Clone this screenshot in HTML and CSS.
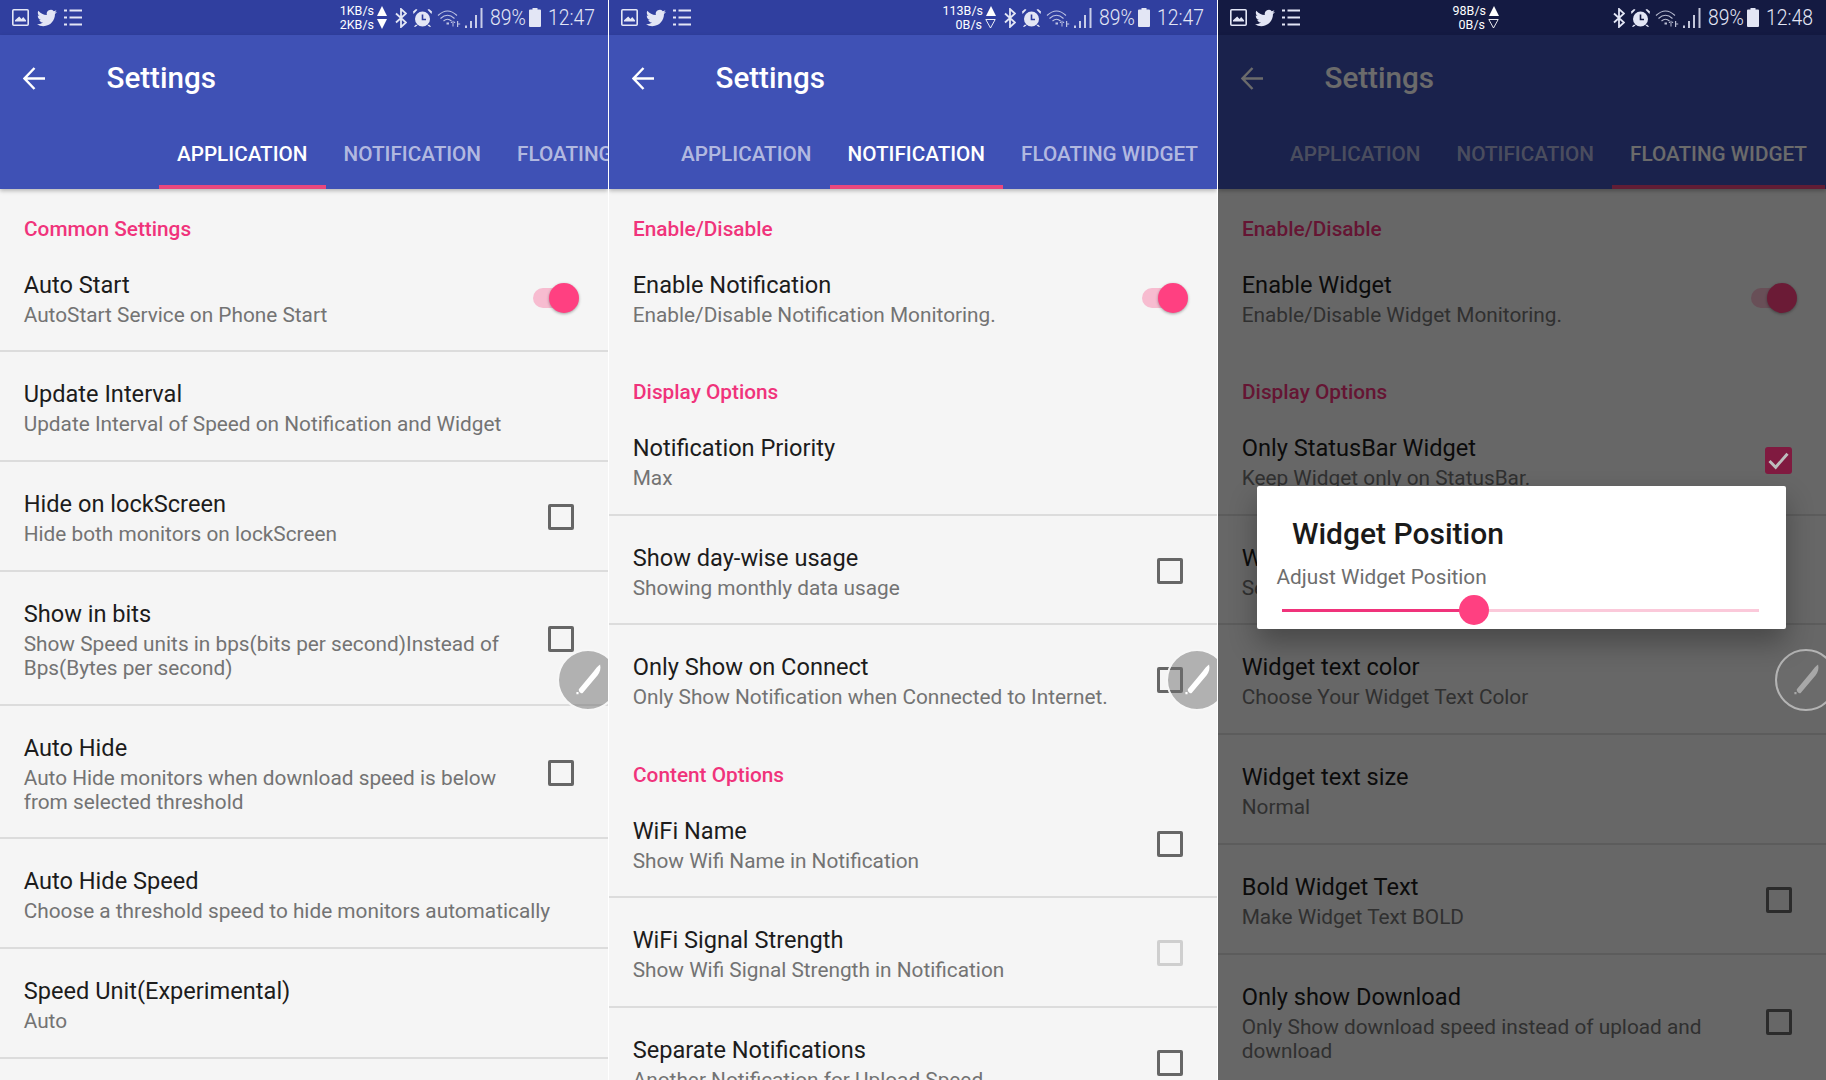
FILE: index.html
```html
<!DOCTYPE html>
<html lang="en">
<head>
    <meta charset="UTF-8">
    <meta name="viewport" content="width=device-width, initial-scale=1.0">
    <title>Settings</title>
    <link rel="stylesheet" href="styles.css">
</head>
<body>
    <svg class="defs" xmlns="http://www.w3.org/2000/svg">
        <symbol id="i-image" viewBox="0 0 17 17">
            <rect x="0.8" y="0.8" width="15.4" height="15.4" rx="1" fill="none" stroke="currentColor" stroke-width="1.6"/>
            <path d="M3 12.5h11v-1.2L11.2 8 9.5 10 7.2 7.6 3 11.3z" fill="currentColor"/>
        </symbol>
        <symbol id="i-twitter" viewBox="0 0 24 24">
            <path fill="currentColor" d="M23.953 4.57a10 10 0 01-2.825.775 4.958 4.958 0 002.163-2.723c-.951.555-2.005.959-3.127 1.184a4.92 4.92 0 00-8.384 4.482C7.69 8.095 4.067 6.13 1.64 3.162a4.822 4.822 0 00-.666 2.475c0 1.71.87 3.213 2.188 4.096a4.904 4.904 0 01-2.228-.616v.06a4.923 4.923 0 003.946 4.827 4.996 4.996 0 01-2.212.085 4.936 4.936 0 004.604 3.417 9.867 9.867 0 01-6.102 2.105c-.39 0-.779-.023-1.17-.067a13.995 13.995 0 007.557 2.209c9.053 0 13.998-7.496 13.998-13.985 0-.21 0-.42-.015-.63A9.935 9.935 0 0024 4.59z"/>
        </symbol>
        <symbol id="i-list" viewBox="0 0 18 17">
            <path fill="currentColor" d="M0 0.5h3v2H0zM0 7.5h3v2H0zM0 14.5h3v2H0zM5.5 0.5H18v2H5.5zM5.5 7.5H18v2H5.5zM5.5 14.5H18v2H5.5z"/>
        </symbol>
        <symbol id="i-bt" viewBox="0 0 12 20">
            <path fill="none" stroke="currentColor" stroke-width="1.8" d="M1 5.5l10 9L6 19V1l5 4.5-10 9"/>
        </symbol>
        <symbol id="i-alarm" viewBox="0 0 19 18">
            <circle cx="9.5" cy="10" r="7.5" fill="currentColor"/>
            <path class="alarm-hand" fill="none" stroke-width="1.6" d="M9.5 5.5V10.500H13"/>
            <path fill="currentColor" d="M0.500 5L4.500 0.800 3 0 0 2.500zM18.500 5L14.500 0.800 16 0 19 2.500zM3 15.500l-2 2 1 .5 2.500-1.500zM16 15.500l2 2-1 .5-2.500-1.500z"/>
        </symbol>
        <symbol id="i-wifi" viewBox="0 0 24 18">
            <g fill="none" stroke="currentColor" stroke-width="1.1">
                <path d="M1 6.500Q10.500 -2.500 20 6.500"/>
                <path d="M3.500 9.500Q10.500 3 17.500 9.500"/>
                <path d="M6.500 12Q10.500 8.500 14.500 12"/>
            </g>
            <path fill="currentColor" d="M9.500 13.500h2.500v2h-2.500zM13.500 14l2 -2.500 0 6h1v-6l2 2.500zM20 12h1.200v2.500h2v1h-2V18H20z"/>
        </symbol>
        <symbol id="i-signal" viewBox="0 0 18 20">
            <path fill="currentColor" d="M0 17.500h2V20H0zM5 13h2v7H5zM10 7h2v13h-2zM15.500 0h2v20h-2z"/>
        </symbol>
        <symbol id="i-battery" viewBox="0 0 12 19">
            <path fill="currentColor" d="M3.500 0h5v1.500H11a1 1 0 011 1V18a1 1 0 01-1 1H1a1 1 0 01-1-1V2.500a1 1 0 011-1h2.500z"/>
        </symbol>
        <symbol id="i-tri-empty" viewBox="0 0 11 10">
            <path fill="none" stroke="currentColor" stroke-width="0.9" d="M0.800 0.500H10.200L5.500 9z"/>
        </symbol>
        <symbol id="i-pen" viewBox="-30 -30 60 60">
            <path fill="currentColor" d="M-9.500 9.500L6 -9C8 -12 10.500 -14.500 12.500 -16 13.500 -12 12.500 -8 10 -5L-5.500 13.500C-7 14.500 -10 12 -9.500 9.500zM-12 12.500h2.200v2.200H-12z"/>
        </symbol>
    </svg>

    <div class="screens">
        <!-- application tab -->
        <section class="panel">
            <div class="status">
                <div class="status-left">
                    <svg class="ic-image"><use href="#i-image"/></svg>
                    <svg class="ic-twitter"><use href="#i-twitter"/></svg>
                    <svg class="ic-list"><use href="#i-list"/></svg>
                </div>
                <div class="speed">
                    <div class="speed-line">1KB/s<span class="tri"></span></div>
                    <div class="speed-line">2KB/s<span class="tri tri-down"></span></div>
                </div>
                <div class="status-right">
                    <svg class="ic-bt"><use href="#i-bt"/></svg>
                    <svg class="ic-alarm"><use href="#i-alarm"/></svg>
                    <svg class="ic-wifi"><use href="#i-wifi"/></svg>
                    <svg class="ic-signal"><use href="#i-signal"/></svg>
                    <span class="battery-text"><span>89%</span></span>
                    <svg class="ic-battery"><use href="#i-battery"/></svg>
                    <span class="clock"><span>12:47</span></span>
                </div>
            </div>
            <header class="appbar">
                <div class="toolbar">
                    <svg class="back" viewBox="0 0 22 23"><path fill="none" stroke="currentColor" stroke-width="2.400" d="M22 11.500H2M11.500 1L1.500 11.500 11.500 22"/></svg>
                    <h1 class="page-title">Settings</h1>
                </div>
                <div class="tabs tabs-first">
                    <div class="tab tab-active">APPLICATION</div>
                    <div class="tab">NOTIFICATION</div>
                    <div class="tab">FLOATING WIDGET</div>
                </div>
            </header>
            <div class="cat">Common Settings</div>
            <div class="row">
                <div class="row-text"><div class="row-title">Auto Start</div><div class="row-sub">AutoStart Service on Phone Start</div></div>
                <div class="switch"><span class="track"></span><span class="thumb"></span></div>
            </div>
            <div class="row">
                <div class="row-text"><div class="row-title">Update Interval</div><div class="row-sub">Update Interval of Speed on Notification and Widget</div></div>
            </div>
            <div class="row">
                <div class="row-text"><div class="row-title">Hide on lockScreen</div><div class="row-sub">Hide both monitors on lockScreen</div></div>
                <span class="check"></span>
            </div>
            <div class="row">
                <div class="row-text"><div class="row-title">Show in bits</div><div class="row-sub">Show Speed units in bps(bits per second)Instead of Bps(Bytes per second)</div></div>
                <span class="check"></span>
            </div>
            <div class="row">
                <div class="row-text"><div class="row-title">Auto Hide</div><div class="row-sub">Auto Hide monitors when download speed is below from selected threshold</div></div>
                <span class="check"></span>
            </div>
            <div class="row">
                <div class="row-text"><div class="row-title">Auto Hide Speed</div><div class="row-sub">Choose a threshold speed to hide monitors automatically</div></div>
            </div>
            <div class="row">
                <div class="row-text"><div class="row-title">Speed Unit(Experimental)</div><div class="row-sub">Auto</div></div>
            </div>
            <div class="fab"><svg class="fab-pen"><use href="#i-pen"/></svg></div>
        </section>

        <!-- notification tab -->
        <section class="panel">
            <div class="status">
                <div class="status-left">
                    <svg class="ic-image"><use href="#i-image"/></svg>
                    <svg class="ic-twitter"><use href="#i-twitter"/></svg>
                    <svg class="ic-list"><use href="#i-list"/></svg>
                </div>
                <div class="speed">
                    <div class="speed-line">113B/s<span class="tri"></span></div>
                    <div class="speed-line">0B/s<svg class="tri-empty"><use href="#i-tri-empty"/></svg></div>
                </div>
                <div class="status-right">
                    <svg class="ic-bt"><use href="#i-bt"/></svg>
                    <svg class="ic-alarm"><use href="#i-alarm"/></svg>
                    <svg class="ic-wifi"><use href="#i-wifi"/></svg>
                    <svg class="ic-signal"><use href="#i-signal"/></svg>
                    <span class="battery-text"><span>89%</span></span>
                    <svg class="ic-battery"><use href="#i-battery"/></svg>
                    <span class="clock"><span>12:47</span></span>
                </div>
            </div>
            <header class="appbar">
                <div class="toolbar">
                    <svg class="back" viewBox="0 0 22 23"><path fill="none" stroke="currentColor" stroke-width="2.400" d="M22 11.500H2M11.500 1L1.500 11.500 11.500 22"/></svg>
                    <h1 class="page-title">Settings</h1>
                </div>
                <div class="tabs">
                    <div class="tab">APPLICATION</div>
                    <div class="tab tab-active">NOTIFICATION</div>
                    <div class="tab">FLOATING WIDGET</div>
                </div>
            </header>
            <div class="cat">Enable/Disable</div>
            <div class="row row-plain">
                <div class="row-text"><div class="row-title">Enable Notification</div><div class="row-sub">Enable/Disable Notification Monitoring.</div></div>
                <div class="switch"><span class="track"></span><span class="thumb"></span></div>
            </div>
            <div class="cat">Display Options</div>
            <div class="row">
                <div class="row-text"><div class="row-title">Notification Priority</div><div class="row-sub">Max</div></div>
            </div>
            <div class="row">
                <div class="row-text"><div class="row-title">Show day-wise usage</div><div class="row-sub">Showing monthly data usage</div></div>
                <span class="check"></span>
            </div>
            <div class="row row-plain">
                <div class="row-text"><div class="row-title">Only Show on Connect</div><div class="row-sub">Only Show Notification when Connected to Internet.</div></div>
                <span class="check"></span>
            </div>
            <div class="cat">Content Options</div>
            <div class="row">
                <div class="row-text"><div class="row-title">WiFi Name</div><div class="row-sub">Show Wifi Name in Notification</div></div>
                <span class="check"></span>
            </div>
            <div class="row">
                <div class="row-text"><div class="row-title">WiFi Signal Strength</div><div class="row-sub">Show Wifi Signal Strength in Notification</div></div>
                <span class="check check-off"></span>
            </div>
            <div class="row">
                <div class="row-text"><div class="row-title">Separate Notifications</div><div class="row-sub">Another Notification for Upload Speed</div></div>
                <span class="check"></span>
            </div>
            <div class="fab"><svg class="fab-pen"><use href="#i-pen"/></svg></div>
        </section>

        <!-- floating widget tab, dialog open -->
        <section class="panel">
            <div class="status status-dim">
                <div class="status-left">
                    <svg class="ic-image"><use href="#i-image"/></svg>
                    <svg class="ic-twitter"><use href="#i-twitter"/></svg>
                    <svg class="ic-list"><use href="#i-list"/></svg>
                </div>
                <div class="speed speed-mid">
                    <div class="speed-line">98B/s<span class="tri"></span></div>
                    <div class="speed-line">0B/s<svg class="tri-empty"><use href="#i-tri-empty"/></svg></div>
                </div>
                <div class="status-right">
                    <svg class="ic-bt"><use href="#i-bt"/></svg>
                    <svg class="ic-alarm"><use href="#i-alarm"/></svg>
                    <svg class="ic-wifi"><use href="#i-wifi"/></svg>
                    <svg class="ic-signal"><use href="#i-signal"/></svg>
                    <span class="battery-text"><span>89%</span></span>
                    <svg class="ic-battery"><use href="#i-battery"/></svg>
                    <span class="clock"><span>12:48</span></span>
                </div>
            </div>
            <header class="appbar">
                <div class="toolbar">
                    <svg class="back" viewBox="0 0 22 23"><path fill="none" stroke="currentColor" stroke-width="2.400" d="M22 11.500H2M11.500 1L1.500 11.500 11.500 22"/></svg>
                    <h1 class="page-title">Settings</h1>
                </div>
                <div class="tabs">
                    <div class="tab">APPLICATION</div>
                    <div class="tab">NOTIFICATION</div>
                    <div class="tab tab-active">FLOATING WIDGET</div>
                </div>
            </header>
            <div class="cat">Enable/Disable</div>
            <div class="row row-plain">
                <div class="row-text"><div class="row-title">Enable Widget</div><div class="row-sub">Enable/Disable Widget Monitoring.</div></div>
                <div class="switch"><span class="track"></span><span class="thumb"></span></div>
            </div>
            <div class="cat">Display Options</div>
            <div class="row">
                <div class="row-text"><div class="row-title">Only StatusBar Widget</div><div class="row-sub">Keep Widget only on StatusBar.</div></div>
                <span class="check check-on"><svg viewBox="0 0 24 24"><path fill="none" stroke="#bdbdbd" stroke-width="2.600" d="M4 12.500l5.500 5.500L20 6"/></svg></span>
            </div>
            <div class="row">
                <div class="row-text"><div class="row-title">Widget Position</div><div class="row-sub">Set Widget Position</div></div>
            </div>
            <div class="row">
                <div class="row-text"><div class="row-title">Widget text color</div><div class="row-sub">Choose Your Widget Text Color</div></div>
            </div>
            <div class="row">
                <div class="row-text"><div class="row-title">Widget text size</div><div class="row-sub">Normal</div></div>
            </div>
            <div class="row">
                <div class="row-text"><div class="row-title">Bold Widget Text</div><div class="row-sub">Make Widget Text BOLD</div></div>
                <span class="check"></span>
            </div>
            <div class="row">
                <div class="row-text"><div class="row-title">Only show Download</div><div class="row-sub">Only Show download speed instead of upload and download</div></div>
                <span class="check"></span>
            </div>

            <div class="scrim"></div>
            <div class="fab fab-dim"><svg class="fab-pen"><use href="#i-pen"/></svg></div>
            <div class="dialog">
                <div class="dialog-title">Widget Position</div>
                <div class="dialog-label">Adjust Widget Position</div>
                <div class="slider">
                    <span class="slider-on" style="width: 40.2%"></span>
                    <span class="slider-thumb"></span>
                    <span class="slider-off"></span>
                </div>
            </div>
        </section>
    </div>
</body>
</html>
```

FILE: styles.css
```css
*{
    padding: 0;
    margin: 0;
    box-sizing: border-box;
}
body{
    background-color: #fff;
    font-family: Roboto, "Noto Sans", sans-serif;
    overflow: hidden;
}
.defs{
    display: none;
}
.screens{
    display: flex;
    gap: 1px;
    width: 1826px;
    height: 1080px;
}
.panel{
    flex: 1;
    min-width: 0;
    height: 1080px;
    background-color: #f5f5f5;
    overflow: hidden;
    position: relative;
}

/* status bar */
.status{
    --hand: #303f9f;
    height: 35px;
    display: flex;
    align-items: center;
    padding: 0 13px 0 12px;
    background-color: #303f9f;
    color: #e3e6f5;
}
.status-dim{
    --hand: #141a42;
    background-color: #141a42;
}
.alarm-hand{
    stroke: var(--hand);
}
.status-left{
    display: flex;
    align-items: center;
}
.ic-image{
    width: 17px;
    height: 17px;
}
.ic-twitter{
    width: 20px;
    height: 20px;
    margin-left: 8px;
}
.ic-list{
    width: 18px;
    height: 17px;
    margin-left: 7px;
}
.speed{
    margin-left: auto;
    margin-right: 8px;
    font-size: 12.500px;
    line-height: 13.500px;
    color: #fff;
    text-align: right;
}
.speed-mid{
    margin-right: 114px;
}
.speed-line{
    display: flex;
    align-items: center;
    justify-content: flex-end;
    gap: 3px;
}
.tri{
    width: 0;
    height: 0;
    border-left: 5.500px solid transparent;
    border-right: 5.500px solid transparent;
    border-bottom: 10px solid #fff;
}
.tri-down{
    border-bottom: 0;
    border-top: 10px solid #fff;
}
.tri-empty{
    width: 11px;
    height: 10px;
}
.status-right{
    display: flex;
    align-items: center;
}
.ic-bt{
    width: 12px;
    height: 20px;
}
.ic-alarm{
    width: 19px;
    height: 18px;
    margin-left: 6px;
}
.ic-wifi{
    width: 24px;
    height: 18px;
    margin-left: 5px;
    opacity: 0.8;
}
.ic-signal{
    width: 18px;
    height: 20px;
    margin-left: 4px;
    opacity: 0.85;
}
.battery-text,
.clock{
    display: block;
    font-weight: 300;
    font-size: 22px;
    line-height: 28px;
    white-space: nowrap;
}
.battery-text{
    width: 34px;
    margin-left: 7px;
}
.clock{
    width: 47px;
    margin-left: 7px;
}
.battery-text span,
.clock span{
    display: inline-block;
    transform: scaleX(0.88);
    transform-origin: left center;
}
.ic-battery{
    width: 12px;
    height: 19px;
    margin-left: 5px;
}

/* app bar */
.appbar{
    background-color: #3f51b5;
    color: #fff;
    box-shadow: 0 2px 4px rgba(0,0,0,0.25);
    position: relative;
}
.toolbar{
    height: 86px;
    display: flex;
    align-items: center;
    padding-left: 23px;
}
.back{
    width: 22px;
    height: 23px;
}
.page-title{
    margin-left: 61.500px;
    font-size: 29.600px;
    font-weight: 500;
    white-space: nowrap;
}
.tabs{
    height: 68px;
    display: flex;
    padding-left: 54px;
}
.tabs-first{
    padding-left: 159px;
}
.tab{
    flex-shrink: 0;
    padding: 0 18px;
    height: 68px;
    line-height: 67px;
    font-size: 20.700px;
    font-weight: 500;
    color: rgba(255,255,255,0.62);
    white-space: nowrap;
    border-bottom: 4px solid transparent;
}
.tab-active{
    color: #fff;
    border-bottom-color: #e8477e;
}

/* list */
.cat{
    padding: 27.500px 24px 2px;
    font-size: 20.800px;
    line-height: 24px;
    font-weight: 500;
    color: #f0337b;
}
.row{
    display: flex;
    align-items: center;
    padding: 26px 34px 23.800px 23.700px;
    border-bottom: 2px solid #dcdcdc;
}
.row-plain{
    border-bottom-color: transparent;
}
.row-text{
    flex: 1;
    min-width: 0;
}
.row-title{
    font-size: 23.600px;
    line-height: 32px;
    color: #1c1c1c;
}
.row-sub{
    margin-top: 2px;
    font-size: 20.800px;
    line-height: 24px;
    color: #737373;
}
.check{
    flex-shrink: 0;
    width: 26px;
    height: 26px;
    margin-left: 36px;
    border: 3.500px solid #666;
    border-radius: 2px;
}
.check-off{
    border-color: #cfcfcf;
}
/* brighter than the scrim allows, so it sits on top */
.check-on{
    width: 27px;
    height: 27px;
    margin-right: 0.500px;
    border: 0;
    border-radius: 3px;
    background-color: #801a40;
    position: relative;
    z-index: 1;
}
.check-on svg{
    display: block;
    width: 100%;
    height: 100%;
}
.switch{
    flex-shrink: 0;
    display: flex;
    align-items: center;
    margin-left: 31px;
    margin-right: -5px;
}
.track{
    width: 36px;
    height: 20px;
    border-radius: 10px;
    background-color: #f7bcd0;
}
.thumb{
    width: 30px;
    height: 30px;
    margin-left: -20px;
    border-radius: 50%;
    background-color: #ff4081;
    box-shadow: 0 1px 3px rgba(0,0,0,0.35);
}

/* floating things */
.fab{
    position: absolute;
    left: 557px;
    top: 649px;
    width: 62px;
    height: 62px;
    border-radius: 50%;
    background-color: rgba(110,110,110,0.5);
    border: 2px solid rgba(255,255,255,0.9);
    color: #fff;
}
.fab-dim{
    background-color: rgba(110,110,110,0.6);
    border-color: #b4b4b4;
    color: #a8a8a8;
}
.fab-pen{
    display: block;
    width: 58px;
    height: 58px;
}
.scrim{
    position: absolute;
    left: 0;
    right: 0;
    top: 35px;
    bottom: 0;
    background-color: rgba(0,0,0,0.58);
}
.dialog{
    position: absolute;
    left: 39px;
    top: 486px;
    width: 529px;
    padding: 30px 27px 4px 25px;
    background-color: #fff;
    border-radius: 2px;
    box-shadow: 0 14px 28px rgba(0,0,0,0.3);
}
.dialog-title{
    margin-left: 10px;
    font-size: 30px;
    line-height: 36px;
    font-weight: 500;
    color: #1a1a1a;
}
.dialog-label{
    margin: 12px 0 0 -5.500px;
    font-size: 20.800px;
    line-height: 26px;
    color: #6e6e6e;
}
.slider{
    display: flex;
    align-items: center;
    height: 30px;
    margin-top: 5px;
}
.slider-on{
    height: 3px;
    background-color: #f0337b;
}
.slider-thumb{
    flex-shrink: 0;
    width: 30px;
    height: 30px;
    margin: 0 -15px;
    border-radius: 50%;
    background-color: #ff4081;
    position: relative;
}
.slider-off{
    flex: 1;
    height: 3px;
    background-color: #fbc9da;
}
```
